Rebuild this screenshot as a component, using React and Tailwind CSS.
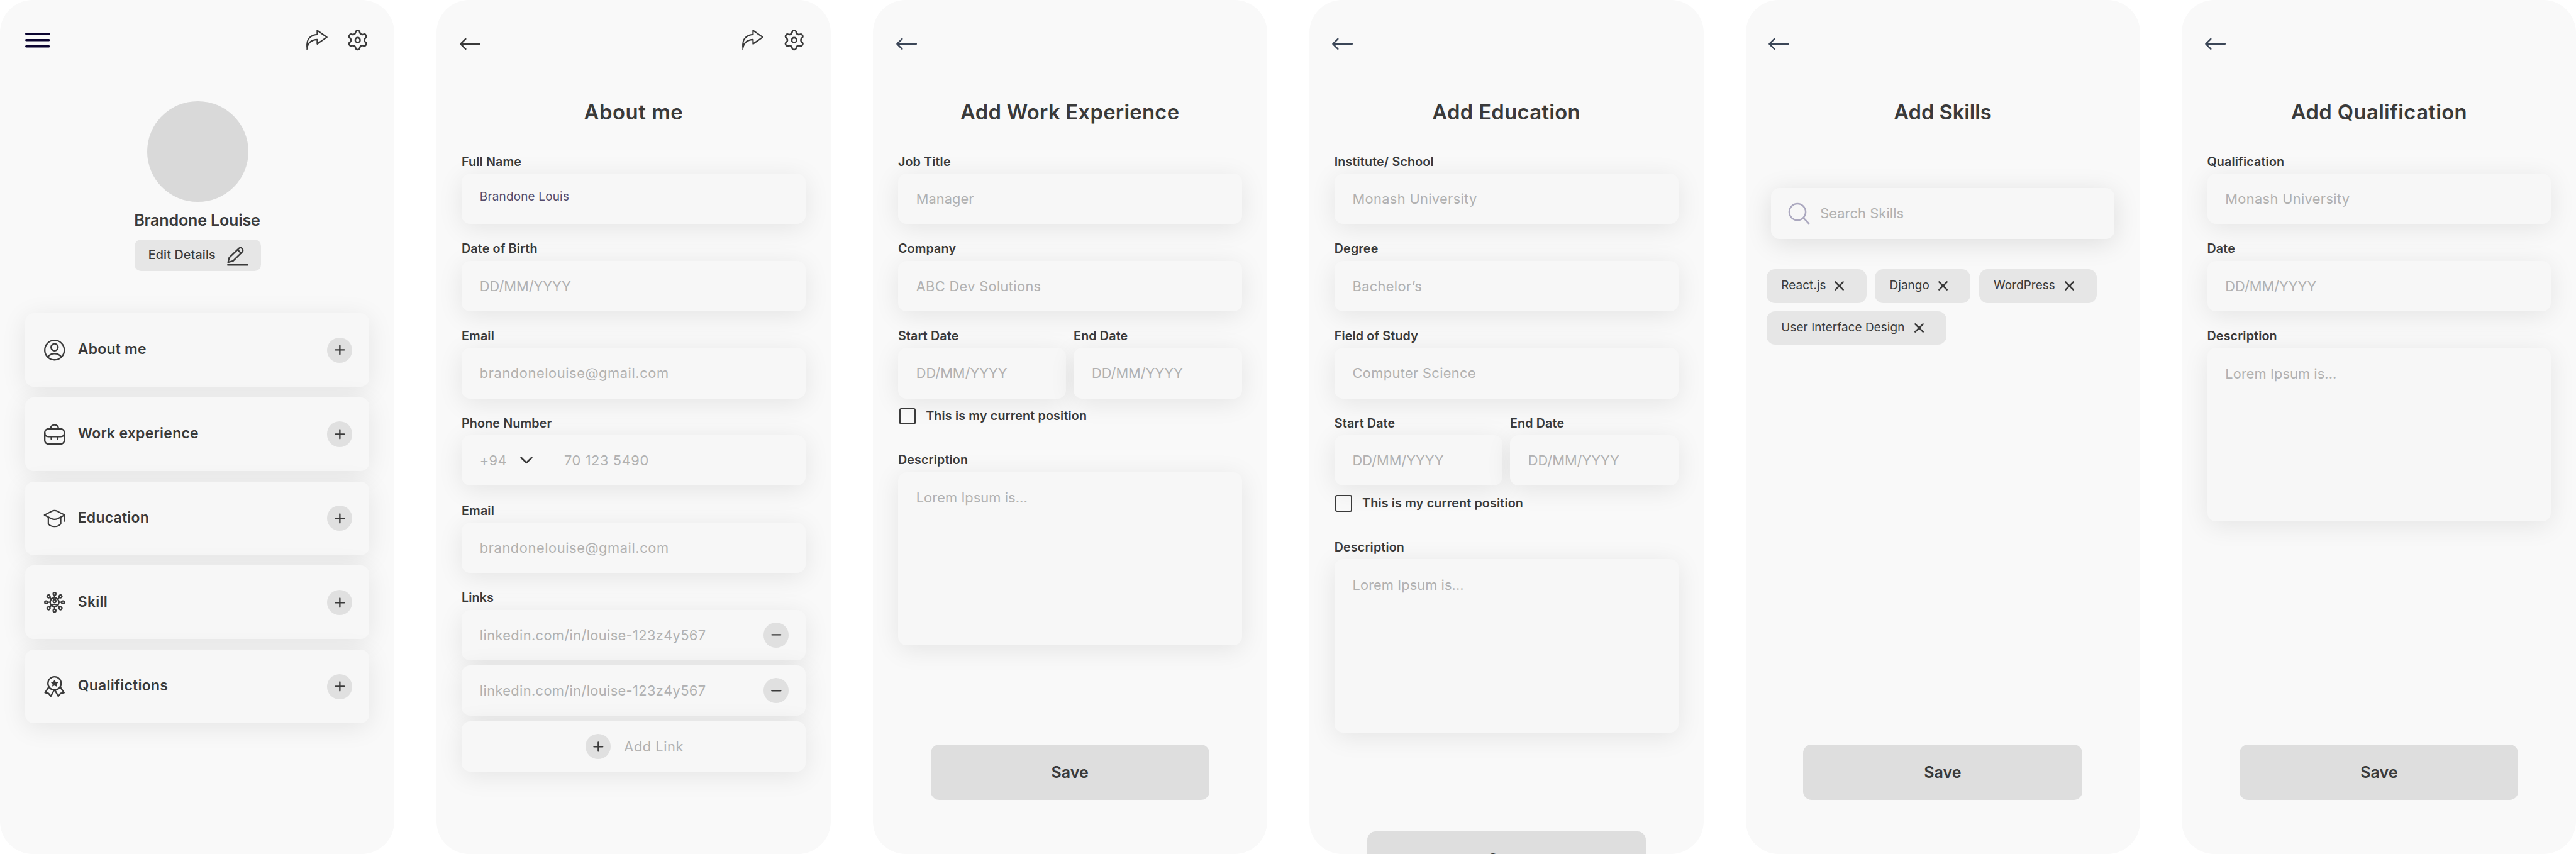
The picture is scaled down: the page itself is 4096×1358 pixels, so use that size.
import React from "react";

const INK = "#3a3a3a";
const SLATE = "#3b4657";

// Every size on the board is a multiple of --spacing, one design unit of the 375x812 screens.
const unit = (n) => `calc(var(--spacing) * ${n})`;

function Icon({ w = 20, h = 20, color = INK, stroke = 1.4, className = "", children }) {
  return (
    <svg
      viewBox={`0 0 ${w} ${h}`}
      style={{ width: unit(w), height: unit(h) }}
      fill="none"
      stroke={color}
      strokeWidth={stroke}
      strokeLinecap="round"
      strokeLinejoin="round"
      className={`block shrink-0 overflow-visible ${className}`}
    >
      {children}
    </svg>
  );
}

const MenuIcon = () => (
  <Icon w={24} h={20} color="#0b0430" stroke={2}>
    <path d="M1 4h21.6M1 10h21.6M1 16h21.6" />
  </Icon>
);

const BackIcon = ({ color }) => (
  <Icon w={20} h={12} color={color} className="-ml-2 mt-8">
    <path d="M19.1 5.9H.9M5.6 1.1L.8 5.9l4.8 4.8" />
  </Icon>
);

const ShareIcon = () => (
  <Icon stroke={1.3}>
    <path d="M10.4 .8L19.6 7.2 10.4 13.6V9.5C6 9.6 2.3 11.8 .8 16.4V13.4C.8 8.6 5 4.9 10.4 4.7Z" />
    <path d="M.6 14v5.2L1.4 15.6" strokeWidth=".8" />
  </Icon>
);

const gearPath = (() => {
  const turn = (x, y, deg) => {
    const a = (deg * Math.PI) / 180;
    return `${(10 + x * Math.cos(a) - y * Math.sin(a)).toFixed(2)} ${(10 + x * Math.sin(a) + y * Math.cos(a)).toFixed(2)}`;
  };
  let d = `M${turn(-2, -7.2, 0)}`;
  for (let k = 0; k < 6; k++) {
    d += `A2 2 0 0 1 ${turn(2, -7.2, k * 60)}Q${turn(2.75, -4.75, k * 60)} ${turn(-2, -7.2, (k + 1) * 60)}`;
  }
  return d + "Z";
})();

const GearIcon = () => (
  <Icon stroke={1.5}>
    <path d={gearPath} />
    <circle cx="10" cy="10" r="2.3" />
  </Icon>
);

const EditIcon = () => (
  <Icon>
    <path d="M1 16.2l1.1-4.5L11 3.2a2.3 2.3 0 0 1 3.5 3.1L5.8 14.9Z" />
    <path d="M10 4.3l3.4 3.2" />
    <path d="M.7 18.7h18.8" />
  </Icon>
);

const UserIcon = () => (
  <Icon>
    <circle cx="10" cy="10" r="9.3" />
    <circle cx="10" cy="7.3" r="3.3" />
    <path d="M3.5 16.4C5.2 14.4 7.4 13.3 10 13.3s4.8 1.1 6.5 3.1" />
  </Icon>
);

const BriefcaseIcon = () => (
  <Icon>
    <rect x=".7" y="4.7" width="18.6" height="14.5" rx="3.5" />
    <path d="M.7 8.6Q.7 12.1 4.2 12.1H15.8Q19.3 12.1 19.3 8.6" />
    <path d="M6.1 4.5C6.5 2.4 7.9 1 10 1s3.5 1.4 3.9 3.5M6.9 12.6v1.8M13.1 12.6v1.8" />
  </Icon>
);

const CapIcon = () => (
  <Icon stroke={1.3}>
    <path d="M.4 6.6L7.5 2.9Q10 1.7 12.5 2.9L19.7 6.6 13 10Q10 11.4 7 10Z" />
    <path d="M4.1 8.8v6.1c1.1 1.6 3.1 2.6 5.9 2.6s4.8-1 5.9-2.6V8.8M19.4 6.9v5.5" />
  </Icon>
);

const SkillIcon = () => (
  <Icon stroke={1.35}>
    <circle cx="10" cy="10" r="4.2" />
    <circle cx="10" cy="8.9" r="1.3" />
    <path d="M7 13C7.8 12.2 8.8 11.9 10 11.9s2.2.3 3 1.1" />
    {[0, 45, 90, 135, 180, 225, 270, 315].map((a) => (
      <g key={a} transform={`rotate(${a} 10 10)`}>
        <circle cx="10" cy="2" r="1.3" />
        <path d="M10 3.5v2" />
      </g>
    ))}
  </Icon>
);

const RibbonIcon = () => (
  <Icon>
    <circle cx="10" cy="7" r="6.3" />
    <path d="M4.1 11.2L1 15.8l3.4.8 2 2.6 3.3-5.8M15.9 11.2l3.1 4.6-3.4.8-2 2.6-3.3-5.8" />
    <path
      d="M10 4.1l.9 1.8 2 .3-1.4 1.4.3 2-1.8-.9-1.8.9.3-2L7.1 6.2l2-.3Z"
      fill={INK}
      strokeWidth=".7"
    />
  </Icon>
);

const SearchIcon = () => (
  <Icon w={20} h={20} color="#aba8bf" stroke={1.5}>
    <circle cx="8.4" cy="8.4" r="7.8" />
    <path d="M14 14l5.2 5.3" />
  </Icon>
);

function RoundButton({ minus }) {
  return (
    <div className="flex size-24 shrink-0 items-center justify-center rounded-full bg-[#e0e0e0]">
      <Icon w={10} h={10}>
        <path d={minus ? "M.9 5h8.2" : "M.9 5h8.2M5 .9v8.2"} />
      </Icon>
    </div>
  );
}

function Screen({ children }) {
  return (
    <section className="flex h-812 w-375 shrink-0 flex-col overflow-hidden rounded-[52px] bg-[#f9f9f9]">
      {children}
    </section>
  );
}

function Actions() {
  return (
    <div className="flex gap-19">
      <ShareIcon />
      <GearIcon />
    </div>
  );
}

function FormScreen({ title, tracking, color = SLATE, actions, children }) {
  return (
    <Screen>
      <header className="flex h-93.5 shrink-0 items-start justify-between pt-28 pr-25 pl-24">
        <BackIcon color={color} />
        {actions && <Actions />}
      </header>
      <h1 className={`h-26 shrink-0 pt-0.25 text-center text-[32.8px] leading-[43.5px] font-semibold ${tracking}`}>{title}</h1>
      {children}
    </Screen>
  );
}

const panel = "rounded-[13.5px] bg-[#f7f7f7] shadow-[0_6.7px_40px_rgba(0,0,0,0.085)]";

function Hint({ tracking = "tracking-[0.016em]", children }) {
  return (
    <span className={`pt-0.75 text-[21.8px] leading-[33.4px] whitespace-nowrap text-[#b1b1b1] ${tracking}`}>
      {children}
    </span>
  );
}

function Label({ children }) {
  return (
    <div className="h-19.25 text-[19.7px] leading-[26.75px] font-semibold tracking-[0.007em] whitespace-nowrap">{children}</div>
  );
}

function Field({ label, hint, tracking, className = "", children }) {
  return (
    <div className={className}>
      <Label>{label}</Label>
      <div className={`flex h-48 items-center pl-17.25 ${panel}`}>
        {children || <Hint tracking={tracking}>{hint}</Hint>}
      </div>
    </div>
  );
}

function Description() {
  return (
    <div>
      <Label>Description</Label>
      <div className={`flex h-165 items-start pt-13.75 pl-17.25 ${panel}`}>
        <Hint tracking="tracking-[0.004em]">Lorem Ipsum is...</Hint>
      </div>
    </div>
  );
}

const DATE = { hint: "DD/MM/YYYY", tracking: "tracking-normal" };

function Period() {
  return (
    <div className="mb-10">
      <div className="flex gap-7">
        <Field label="Start Date" {...DATE} className="flex-1" />
        <Field label="End Date" {...DATE} className="flex-1" />
      </div>
      <div className="mt-9 flex h-16 items-center pl-1">
        <div className="size-16 rounded-[3px] border-2 border-[#3a3a3a]" />
        <span className="pl-9.5 text-[19.7px] leading-none font-semibold tracking-[0.008em]">This is my current position</span>
      </div>
    </div>
  );
}

function Form({ children }) {
  return <div className="flex shrink-0 flex-col gap-15.75 px-24 pt-26.25">{children}</div>;
}

function Save({ className }) {
  return (
    <button className={`ml-55 flex h-53 w-265 shrink-0 items-center justify-center rounded-[13.5px] bg-[#dedede] pt-1 text-[25.1px] font-semibold ${className}`}>
      Save
    </button>
  );
}

const sections = [
  ["About me", UserIcon],
  ["Work experience", BriefcaseIcon],
  ["Education", CapIcon],
  ["Skill", SkillIcon],
  ["Qualifictions", RibbonIcon],
];

function ProfileScreen() {
  return (
    <Screen>
      <header className="flex h-96 shrink-0 items-start justify-between pt-28 pr-25 pl-24">
        <MenuIcon />
        <Actions />
      </header>
      <div className="ml-140 size-96 shrink-0 rounded-full bg-[#d9d9d9]" />
      <div className="mt-7.5 h-20 text-center text-[25.1px] leading-[33.4px] font-semibold tracking-[-0.008em]">Brandone Louise</div>
      <button className="mt-8.5 ml-128 flex h-30 w-120 shrink-0 items-center justify-between rounded-[10px] bg-[#e6e6e6] pr-12 pl-13">
        <span className="pb-1 text-[19.7px] leading-none font-medium tracking-[0.008em] whitespace-nowrap">Edit Details</span>
        <EditIcon />
      </button>
      <div className="mt-40 flex flex-col gap-10 px-24">
        {sections.map(([name, Glyph]) => (
          <div key={name} className={`flex h-70 items-center pr-16 pl-18 ${panel}`}>
            <Glyph />
            <span className="grow pb-1 pl-12 text-[22.9px] leading-none font-semibold tracking-[0.012em]">{name}</span>
            <RoundButton />
          </div>
        ))}
      </div>
    </Screen>
  );
}

function LinkRow() {
  return (
    <div className={`flex h-48 items-center justify-between pr-16 pl-17.25 ${panel}`}>
      <Hint tracking="tracking-[0.017em]">linkedin.com/in/louise-123z4y567</Hint>
      <RoundButton minus />
    </div>
  );
}

function AboutScreen() {
  return (
    <FormScreen title="About me" tracking="tracking-[0.018em]" color={INK} actions>
      <Form>
        <Field label="Full Name">
          <span className="pb-2.5 text-[18.9px] leading-none tracking-[0.011em] text-[#524b6b]">Brandone Louis</span>
        </Field>
        <Field label="Date of Birth" {...DATE} />
        <Field label="Email" hint="brandonelouise@gmail.com" tracking="tracking-[0.027em]" />
        <Field label="Phone Number">
          <Hint>+94</Hint>
          <Icon w={12} h={7} stroke={1.6} className="ml-12.5">
            <path d="M1 1l5 4.9L11 1" />
          </Icon>
          <div className="mr-16 ml-13 h-21 w-1 bg-[#afafaf]" />
          <Hint tracking="tracking-[0.027em]">70 123 5490</Hint>
        </Field>
        <Field label="Email" hint="brandonelouise@gmail.com" tracking="tracking-[0.027em]" />
        <div>
          <Label>Links</Label>
          <div className="flex flex-col gap-5">
            <LinkRow />
            <LinkRow />
            <div className={`flex h-48 items-center gap-12.5 pl-118 ${panel}`}>
              <RoundButton />
              <Hint tracking="tracking-[0.025em]">Add Link</Hint>
            </div>
          </div>
        </div>
      </Form>
    </FormScreen>
  );
}

const skills = [
  ["React.js", "w-95"],
  ["Django", "w-91"],
  ["WordPress", "w-112"],
  ["User Interface Design", "w-171"],
];

function SkillsScreen() {
  return (
    <FormScreen title="Add Skills" tracking="tracking-[-0.003em]">
      <div className="mx-24 mt-59.5 flex h-48 shrink-0 items-center gap-10 rounded-[13.5px] bg-[#f7f7f7] pl-17 shadow-[0_6.7px_42px_rgba(0,0,0,0.115)]">
        <SearchIcon />
        <Hint tracking="tracking-[0.004em]">Search Skills</Hint>
      </div>
      <div className="mt-29 flex flex-wrap gap-8 px-20">
        {skills.map(([name, width]) => (
          <div key={name} className={`flex h-32 items-center justify-between rounded-[13.5px] bg-[#e6e6e6] pr-21.5 pl-14 ${width}`}>
            <span className="text-[18.9px] leading-none tracking-[0.004em] whitespace-nowrap">{name}</span>
            <Icon w={9} h={9} stroke={1.5}>
              <path d="M.8.8l7.4 7.4M8.2.8L.8 8.2" />
            </Icon>
          </div>
        ))}
      </div>
      <Save className="mt-auto mb-51" />
    </FormScreen>
  );
}

export default function App() {
  return (
    <main className="flex h-[1358px] w-[4096px] gap-40 overflow-hidden bg-white font-[Inter,sans-serif] text-[#3a3a3a] [--spacing:1.672px]">
      <ProfileScreen />
      <AboutScreen />
      <FormScreen title="Add Work Experience" tracking="tracking-[0.0085em]">
        <Form>
          <Field label="Job Title" hint="Manager" tracking="tracking-[0.004em]" />
          <Field label="Company" hint="ABC Dev Solutions" />
          <Period />
          <Description />
        </Form>
        <Save className="mt-94" />
      </FormScreen>
      <FormScreen title="Add Education" tracking="tracking-[0.01em]">
        <Form>
          <Field label="Institute/ School" hint="Monash University" />
          <Field label="Degree" hint="Bachelor’s" />
          <Field label="Field of Study" hint="Computer Science" />
          <Period />
          <Description />
        </Form>
        <Save className="mt-94" />
      </FormScreen>
      <SkillsScreen />
      <FormScreen title="Add Qualification" tracking="tracking-[0.0115em]">
        <Form>
          <Field label="Qualification" hint="Monash University" />
          <Field label="Date" {...DATE} />
          <Description />
        </Form>
        <Save className="mt-auto mb-51" />
      </FormScreen>
    </main>
  );
}
